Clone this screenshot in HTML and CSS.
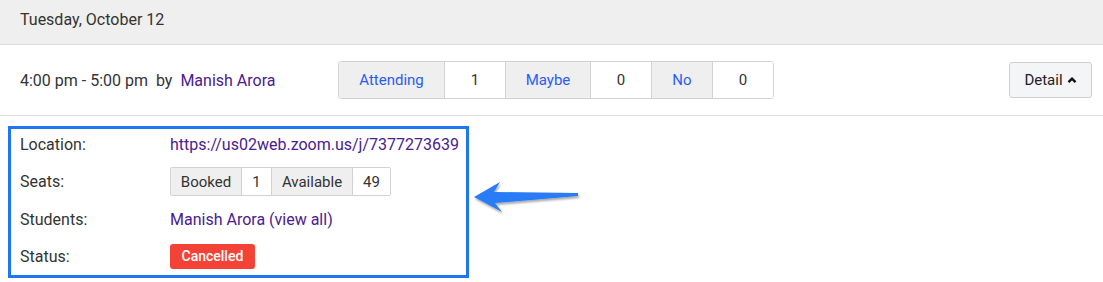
FILE: index.html
```html
<!DOCTYPE html>
<html>
<head>
  <title>Session</title>
  <link rel="stylesheet" href="styles.css">
</head>
<body>
<div class="day-header">Tuesday, October 12</div>

<div class="session-row">
  <div class="session-time">4:00 pm - 5:00 pm &nbsp;by&nbsp; <a href="#">Manish Arora</a></div>
  <div class="rsvp-group">
    <span class="rsvp-label rsvp-attending">Attending</span>
    <span class="rsvp-count rsvp-c1">1</span>
    <span class="rsvp-label rsvp-maybe">Maybe</span>
    <span class="rsvp-count rsvp-c2">0</span>
    <span class="rsvp-label rsvp-no">No</span>
    <span class="rsvp-count rsvp-c3">0</span>
  </div>
  <button class="detail-btn">Detail <svg width="10" height="8" viewBox="0 0 10 8"><path d="M1.5 6.2 L5 2.6 L8.5 6.2" fill="none" stroke="#111" stroke-width="2.4"/></svg></button>
</div>

<div class="details">
  <div class="detail-row">
    <span class="detail-label">Location:</span>
    <a href="#">https://us02web.zoom.us/j/7377273639</a>
  </div>
  <div class="detail-row">
    <span class="detail-label">Seats:</span>
    <div class="seats-group">
      <span class="seat-label seat-booked">Booked</span>
      <span class="seat-count seat-c1">1</span>
      <span class="seat-label seat-avail">Available</span>
      <span class="seat-count seat-c2">49</span>
    </div>
  </div>
  <div class="detail-row">
    <span class="detail-label">Students:</span>
    <span><a href="#">Manish Arora</a> <a href="#">(view all)</a></span>
  </div>
  <div class="detail-row">
    <span class="detail-label">Status:</span>
    <span class="status-badge">Cancelled</span>
  </div>
</div>

<svg class="callout-arrow" width="120" height="40" viewBox="0 0 120 40">
  <defs>
    <filter id="sh" x="-10%" y="-20%" width="130%" height="160%">
      <feDropShadow dx="1" dy="2" stdDeviation="1.2" flood-color="#000" flood-opacity="0.35"/>
    </filter>
  </defs>
  <polygon filter="url(#sh)" fill="#2a7cf6" points="4,19 30,4 24,14 108,15 108,18 25,25 32,34"/>
</svg>
</body>
</html>
```

FILE: styles.css
```css
body {
  font-family: Roboto, "Liberation Sans", Arial, sans-serif;
  font-size: 16px;
  color: #333;
  margin: 0;
  position: relative;
}
a {
  color: #4a2090;
  text-decoration: none;
}
.day-header {
  background: #efefef;
  border-bottom: 1px solid #dcdcdc;
  padding: 10px 20px 14px;
  line-height: 20px;
}
.session-row {
  display: flex;
  align-items: center;
  padding: 16px 11px 16px 20px;
  border-bottom: 1px solid #dcdcdc;
}
.session-time {
  width: 318px;
}
.rsvp-group {
  display: flex;
  height: 36px;
  border: 1px solid #d2d2d2;
  border-radius: 3px;
  overflow: hidden;
  font-size: 15px;
}
.rsvp-group span {
  display: flex;
  align-items: center;
  justify-content: center;
  border-left: 1px solid #d2d2d2;
}
.rsvp-group span:first-child {
  border-left: none;
}
.rsvp-label {
  background: #efefef;
  color: #2a5cf5;
}
.rsvp-count {
  background: #fff;
  color: #333;
}
.rsvp-attending { width: 105px; }
.rsvp-c1 { width: 60px; }
.rsvp-maybe { width: 84px; }
.rsvp-c2 { width: 60px; }
.rsvp-no { width: 60px; }
.rsvp-c3 { width: 60px; }
.detail-btn {
  margin-left: auto;
  height: 36px;
  width: 83px;
  background: #f4f5f7;
  border: 1px solid #cfcfcf;
  border-radius: 3px;
  font-family: inherit;
  font-size: 15px;
  color: #222;
  display: flex;
  align-items: center;
  justify-content: center;
  gap: 4px;
  padding: 0;
}
.details {
  margin: 10px 0 0 8px;
  width: 446px;
  border: 3px solid #1f76f5;
  padding: 0 0 3px 9px;
  display: flex;
  flex-direction: column;
  gap: 7.5px;
}
.detail-row {
  display: flex;
  align-items: center;
  height: 30px;
}
.detail-label {
  width: 150px;
}
.seats-group {
  display: flex;
  height: 27px;
  border: 1px solid #d2d2d2;
  border-radius: 2px;
  overflow: hidden;
  font-size: 15px;
}
.seats-group span {
  display: flex;
  align-items: center;
  justify-content: center;
  border-left: 1px solid #d2d2d2;
}
.seats-group span:first-child {
  border-left: none;
}
.seat-label {
  background: #efefef;
}
.seat-count {
  background: #fff;
}
.seat-booked { width: 70px; }
.seat-c1 { width: 29px; }
.seat-avail { width: 80px; }
.seat-c2 { width: 37px; }
.status-badge {
  background: #f44336;
  color: #fff;
  font-size: 14px;
  font-weight: 500;
  border-radius: 3px;
  padding: 0 11.5px;
  height: 25px;
  line-height: 25px;
}
.callout-arrow {
  position: absolute;
  left: 470px;
  top: 178px;
}
```
